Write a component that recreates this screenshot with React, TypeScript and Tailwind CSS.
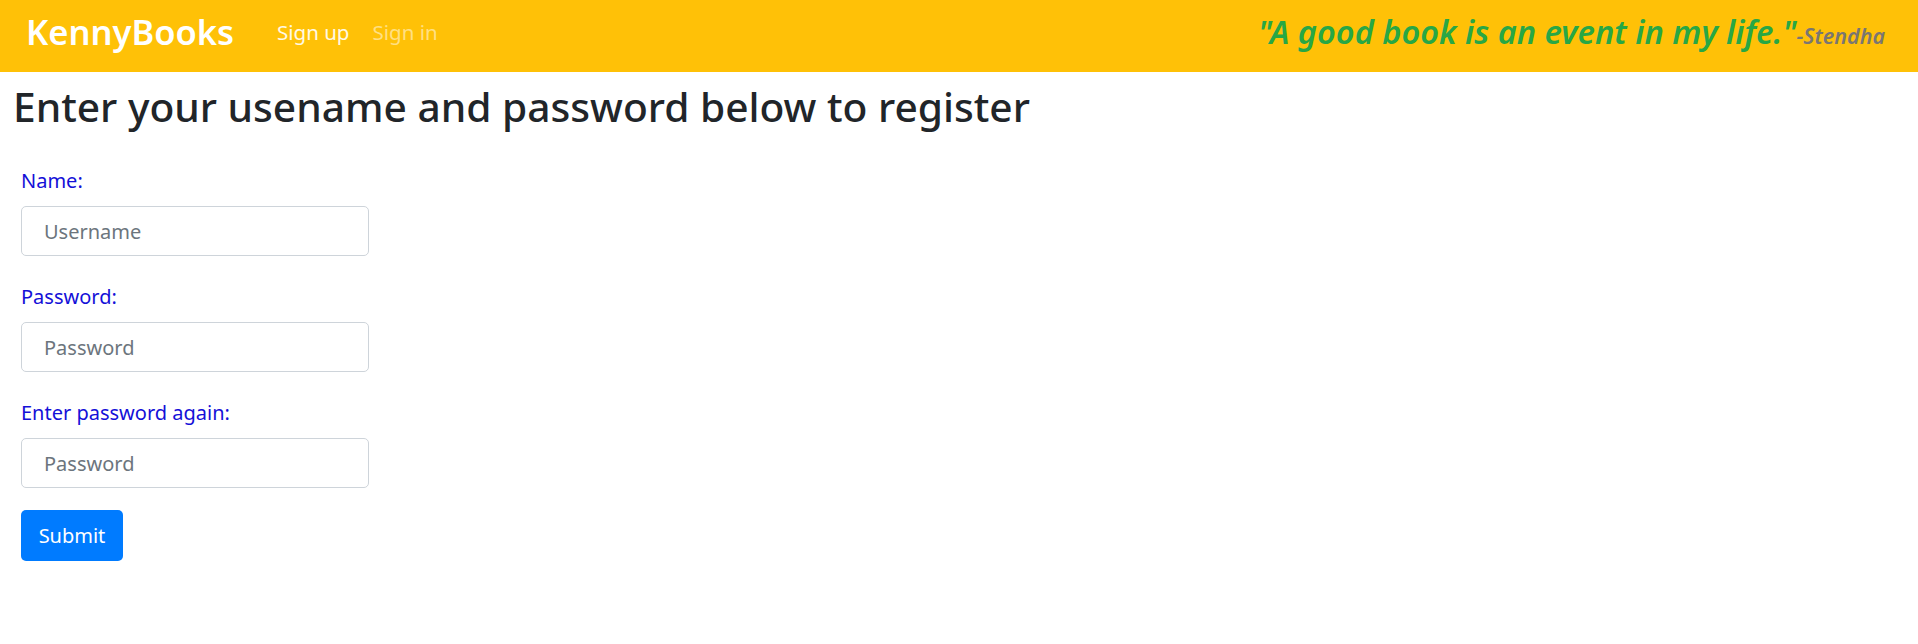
import React from "react";

export default function App() {
  const font = { fontFamily: '"Noto Sans", "Open Sans", sans-serif' };
  const inputCls =
    "block h-[50px] w-full rounded-[5px] border border-[#ced4da] px-[22px] text-[20px] text-[#495057] placeholder:text-[#6c757d] outline-none";
  const labelCls = "mb-[10px] block text-[20px] leading-[30px] text-[#1410d8]";
  return (
    <div className="min-h-[644px] w-full bg-white" style={font}>
      <nav className="flex h-[72px] items-center bg-[#ffc107] pb-[7px] pl-[26px] pr-[33px]">
        <span className="text-[34.5px] font-semibold leading-none text-white">KennyBooks</span>
        <div className="ml-[43px] flex items-center gap-[23px] text-[20.5px]">
          <span className="text-white/90">Sign up</span>
          <span className="text-white/50">Sign in</span>
        </div>
        <div className="ml-auto flex items-baseline italic">
          <span className="text-[32.6px] font-semibold text-[#28a745]">"A good book is an event in my life."</span>
          <span className="text-[21.5px] font-semibold text-[#7a7672]">-Stendha</span>
        </div>
      </nav>
      <h1 className="mt-[6px] ml-[13px] text-[40.7px] font-medium leading-[56px] text-[#212529]">
        Enter your usename and password below to register
      </h1>
      <form className="ml-[21px] mt-[32px] w-[348px]" onSubmit={(e) => e.preventDefault()}>
        <div className="mb-[26px]">
          <label className={labelCls}>Name:</label>
          <input className={inputCls} placeholder="Username" />
        </div>
        <div className="mb-[26px]">
          <label className={labelCls}>Password:</label>
          <input type="password" className={inputCls} placeholder="Password" />
        </div>
        <div className="mb-[22px]">
          <label className={labelCls}>Enter password again:</label>
          <input type="password" className={inputCls} placeholder="Password" />
        </div>
        <button
          type="submit"
          className="h-[51px] w-[102px] rounded-[5px] bg-[#007bff] text-[20px] text-white"
        >
          Submit
        </button>
      </form>
    </div>
  );
}
